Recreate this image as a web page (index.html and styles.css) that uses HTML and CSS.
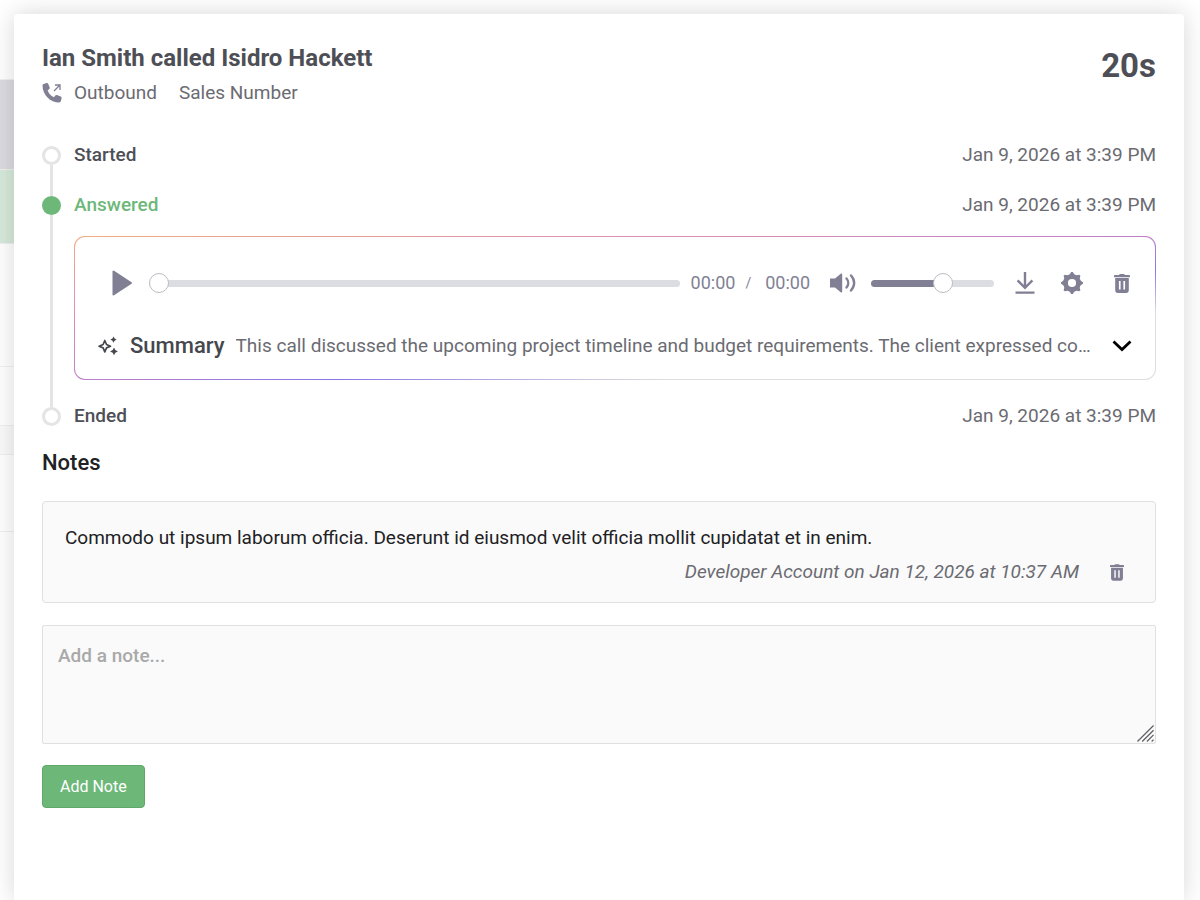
FILE: index.html
```
<!DOCTYPE html>
<html lang="en">
<head>
    <meta charset="UTF-8">
    <meta name="viewport" content="width=device-width, initial-scale=1.0">
    <title>Call details</title>
    <link rel="stylesheet" href="styles.css">
</head>
<body>
    <div class="backdrop">
        <div class="row row-blank"></div>
        <div class="row row-header"></div>
        <div class="row row-selected"></div>
        <div class="row row-tall"></div>
        <div class="row row-medium"></div>
        <div class="row row-short"></div>
        <div class="row row-item"></div>
    </div>

    <main class="modal">
        <header class="call-header">
            <div>
                <h1 class="call-title">Ian Smith called Isidro Hackett</h1>
                <div class="call-meta">
                    <svg class="icon-phone" viewBox="0 0 20 20" aria-hidden="true">
                        <path fill="#817f94" d="M1.600 1 4.600.1C5.300-.1 6 .2 6.300.9l1.400 3.500c.3.600.1 1.300-.5 1.700L5.600 7.500c1.100 3 3.300 5.300 6.300 6.700l1.400-1.700c.4-.5 1.100-.7 1.700-.4l3.700 1.500c.7.300 1.100 1 .9 1.700l-.8 3c-.2.700-.8 1.200-1.500 1.200C8.300 19.500.5 11.700.5 2.400.5 1.700.9 1.200 1.600 1z"/>
                        <path fill="none" stroke="#817f94" stroke-width="1.300" d="M12 8 17.700 2.300M13 2h5v5"/>
                    </svg>
                    <span>Outbound</span>
                    <span class="call-number">Sales Number</span>
                </div>
            </div>
            <div class="call-duration">20s</div>
        </header>

        <ol class="timeline">
            <li class="event">
                <div class="marker"><span class="dot"></span><span class="line"></span></div>
                <div class="event-body">
                    <div class="event-row">
                        <span class="event-label">Started</span>
                        <time class="event-time">Jan 9, 2026 at 3:39 PM</time>
                    </div>
                </div>
            </li>
            <li class="event">
                <div class="marker"><span class="dot dot-active"></span><span class="line"></span></div>
                <div class="event-body">
                    <div class="event-row">
                        <span class="event-label event-label-active">Answered</span>
                        <time class="event-time">Jan 9, 2026 at 3:39 PM</time>
                    </div>
                    <section class="recording">
                        <div class="player">
                            <button type="button" class="icon-button play" aria-label="Play">
                                <svg width="20" height="26" viewBox="0 0 20 26"><path d="M1.500 1.500v23L19 13z" fill="#817f94" stroke="#817f94" stroke-width="2" stroke-linejoin="round"/></svg>
                            </button>
                            <input type="range" class="slider seek" min="0" max="100" value="0" aria-label="Seek">
                            <div class="clock"><span>00:00</span><span class="slash">/</span><span>00:00</span></div>
                            <button type="button" class="icon-button mute" aria-label="Mute">
                                <svg width="26" height="20" viewBox="0 0 26 20">
                                    <path fill="#817f94" d="M0 5.500h5L11 .6c.5-.4 1.200-.1 1.200.6v17.600c0 .7-.7 1-1.200.6l-6-4.900H0z"/>
                                    <path fill="none" stroke="#817f94" stroke-width="2.400" stroke-linecap="round" d="M16.500 5.500c2.300 2.600 2.300 6.400 0 9M21 2.500c4.200 4.500 4.200 10.500 0 15"/>
                                </svg>
                            </button>
                            <input type="range" class="slider volume" min="0" max="100" value="60" aria-label="Volume">
                            <button type="button" class="icon-button download" aria-label="Download">
                                <svg width="20" height="22" viewBox="0 0 20 22"><path fill="none" stroke="#817f94" stroke-width="2.400" d="M10 0v15M2.600 8.400 10 15.800l7.400-7.400M.5 20.600h19"/></svg>
                            </button>
                            <button type="button" class="icon-button settings" aria-label="Settings">
                                <svg width="22" height="22" viewBox="0 0 22 22">
                                    <circle cx="11" cy="11" r="6.500" fill="none" stroke="#817f94" stroke-width="4.800"/>
                                    <g fill="#817f94">
                                        <path id="tooth" d="M8 3.500 10.200 0h1.600l2.200 3.500z"/>
                                        <use href="#tooth" transform="rotate(45 11 11)"/>
                                        <use href="#tooth" transform="rotate(90 11 11)"/>
                                        <use href="#tooth" transform="rotate(135 11 11)"/>
                                        <use href="#tooth" transform="rotate(180 11 11)"/>
                                        <use href="#tooth" transform="rotate(225 11 11)"/>
                                        <use href="#tooth" transform="rotate(270 11 11)"/>
                                        <use href="#tooth" transform="rotate(315 11 11)"/>
                                    </g>
                                </svg>
                            </button>
                            <button type="button" class="icon-button" aria-label="Delete recording">
                                <svg width="16" height="19" viewBox="0 0 16 19">
                                    <path fill="#817f94" fill-rule="evenodd" d="M5 .9C5.300.3 5.700 0 6.300 0h3.400c.6 0 1 .3 1.300.9h4.200c.5 0 .8.300.8.800V3.200H0V1.700C0 1.200.3.900.8.900zM1.200 4.100h13.600v12.100c0 1.600-1 2.800-2.600 2.800H3.800c-1.600 0-2.600-1.200-2.600-2.800zM4.900 7v8.600h1.700V7zM9.400 7v8.600h1.700V7z"/>
                                </svg>
                            </button>
                        </div>
                        <div class="summary">
                            <svg class="icon-sparkle" viewBox="0 0 20 20" aria-hidden="true">
                                <path fill="none" stroke="#46474d" stroke-width="1.700" stroke-linejoin="round" d="M6.800 4.500 8.500 8.500 12.500 10.200 8.500 11.900 6.800 15.900 5.100 11.900 1.100 10.200 5.100 8.500z"/>
                                <path fill="#46474d" d="m15.500.5 1.100 2 2 1.100-2 1.100-1.100 2-1.100-2-2-1.100 2-1.100zM16 11.500l1.300 2.600 2.600 1.300-2.600 1.300L16 19.300l-1.300-2.600-2.600-1.300 2.600-1.300z"/>
                            </svg>
                            <h2 class="summary-title">Summary</h2>
                            <p class="summary-text">This call discussed the upcoming project timeline and budget requirements. The client expressed concerns about the delivery schedule.</p>
                            <button type="button" class="icon-button" aria-label="Expand summary">
                                <svg width="20" height="12" viewBox="0 0 20 12"><path fill="none" stroke="#000" stroke-width="2.800" d="m1.500 1.500 8.500 8 8.500-8"/></svg>
                            </button>
                        </div>
                    </section>
                </div>
            </li>
            <li class="event">
                <div class="marker"><span class="dot"></span></div>
                <div class="event-body">
                    <div class="event-row">
                        <span class="event-label">Ended</span>
                        <time class="event-time">Jan 9, 2026 at 3:39 PM</time>
                    </div>
                </div>
            </li>
        </ol>

        <section>
            <h2 class="notes-title">Notes</h2>
            <article class="note">
                <p class="note-text">Commodo ut ipsum laborum officia. Deserunt id eiusmod velit officia mollit cupidatat et in enim.</p>
                <div class="note-footer">
                    <span class="note-author">Developer Account on Jan 12, 2026 at 10:37 AM</span>
                    <button type="button" class="icon-button" aria-label="Delete note">
                        <svg width="14" height="17" viewBox="0 0 16 19">
                            <path fill="#817f94" fill-rule="evenodd" d="M5 .9C5.300.3 5.700 0 6.300 0h3.400c.6 0 1 .3 1.300.9h4.200c.5 0 .8.300.8.800V3.200H0V1.700C0 1.200.3.900.8.900zM1.200 4.100h13.600v12.100c0 1.600-1 2.800-2.600 2.800H3.800c-1.600 0-2.600-1.200-2.600-2.800zM4.900 7v8.600h1.700V7zM9.400 7v8.600h1.700V7z"/>
                        </svg>
                    </button>
                </div>
            </article>
            <form class="note-form">
                <div class="note-field">
                    <textarea class="note-input" placeholder="Add a note..." aria-label="Add a note"></textarea>
                    <svg class="grip" viewBox="0 0 18 18" aria-hidden="true"><path fill="none" stroke="#5e5e66" stroke-width="1.300" d="M.5 17.500l17-17M5.500 17.500l12-12M10.500 17.500l7-7M15.500 17.500l2-2"/></svg>
                </div>
                <button type="button" class="add-note">Add Note</button>
            </form>
        </section>
    </main>
</body>
</html>
```
FILE: styles.css
```
* {
    box-sizing: border-box;
}

body {
    margin: 0;
    min-height: 100vh;
    display: grid;
    font-family: Roboto, sans-serif;
    font-size: 19px;
    line-height: 24px;
    color: #6b6b72;
    background: #fff;
}

h1, h2, p, ol {
    margin: 0;
    padding: 0;
}

/* Page behind the modal */
.backdrop {
    grid-area: 1 / 1;
}

.row {
    width: 40px;
    border-bottom: 1px solid #f0f0f0;
}

.row-blank {
    height: 80px;
}

.row-header {
    height: 90px;
    background: #dcdbe1;
}

.row-selected {
    height: 74px;
    background: #d6eadb;
}

.row-tall {
    height: 123px;
}

.row-medium {
    height: 59px;
}

.row-short {
    height: 29px;
    background: #fafafa;
}

.row-item {
    height: 77px;
}

/* Modal */
.modal {
    grid-area: 1 / 1;
    min-width: 0;
    margin: 14px 16px 0 14px;
    padding: 28px;
    background: #fff;
    border-radius: 4px 4px 0 0;
    box-shadow: 0 0 24px rgba(0, 0, 0, 0.16);
}

.call-header {
    display: flex;
    justify-content: space-between;
}

.call-title {
    font-size: 24px;
    line-height: 32px;
    font-weight: 700;
    color: #4e4f56;
}

.call-meta {
    display: flex;
    align-items: center;
    margin-top: 7px;
}

.icon-phone {
    width: 20px;
    height: 20px;
    margin-right: 12px;
}

.call-number {
    margin-left: 22px;
}

.call-duration {
    font-size: 33px;
    line-height: 48px;
    font-weight: 700;
    color: #4e4f56;
}

/* Timeline */
.timeline {
    margin-top: 36px;
    list-style: none;
}

.event {
    display: grid;
    grid-template-columns: 19px 1fr;
    gap: 13px;
}

.marker {
    display: flex;
    flex-direction: column;
    align-items: center;
    padding-top: 5px;
}

.dot {
    width: 19px;
    height: 19px;
    border: 3px solid #e4e4e4;
    border-radius: 50%;
}

.dot-active {
    background: #6db879;
    border-color: #6db879;
}

.line {
    flex: 1;
    width: 3px;
    margin-bottom: -5px;
    background: #e4e4e4;
}

.event-body {
    min-width: 0;
    padding-bottom: 22px;
}

.event:last-child .event-body {
    padding-bottom: 0;
}

.event-row {
    display: flex;
    align-items: center;
    justify-content: space-between;
    min-height: 28px;
}

.event-label {
    font-weight: 500;
    color: #4e4f56;
}

.event-label-active {
    color: #6db879;
}

/* Recording card */
.recording {
    margin-top: 17px;
    padding: 31px 23px 21px;
    border: 1px solid transparent;
    border-radius: 11px;
    background:
        linear-gradient(#fff, #fff) padding-box,
        linear-gradient(to bottom right, #f0ac80, #df90b0 25%, #bf7fc8 50%, #8577e6 62%, #dedede 77%) border-box;
}

.player {
    display: flex;
    align-items: center;
    height: 30px;
    padding: 0 2px 0 14px;
    color: #817f94;
}

.icon-button {
    display: flex;
    padding: 0;
    border: none;
    background: none;
    cursor: pointer;
}

.play {
    margin-right: 17px;
}

.slider {
    -webkit-appearance: none;
    appearance: none;
    height: 20px;
    margin: 0;
    background: none;
}

.slider::-webkit-slider-runnable-track {
    height: 7px;
    border-radius: 4px;
    background: #dcdce3;
}

.slider::-webkit-slider-thumb {
    -webkit-appearance: none;
    width: 20px;
    height: 20px;
    margin-top: -7px;
    border: 1px solid #bcbcc4;
    border-radius: 50%;
    background: #fff;
}

.seek {
    flex: 1;
    min-width: 0;
}

.volume {
    width: 123px;
}

.volume::-webkit-slider-runnable-track {
    background: linear-gradient(to right, #817f94 60%, #dcdce3 60%);
}

.clock {
    display: flex;
    margin: 0 20px 0 11px;
    font-size: 18px;
}

.slash {
    margin: 0 14px 0 10px;
    font-size: 14px;
}

.mute {
    margin-right: 15px;
}

.download {
    margin-left: 21px;
}

.settings {
    margin: 0 31px 0 26px;
}

.summary {
    display: flex;
    align-items: center;
    margin-top: 36px;
}

.icon-sparkle {
    flex: none;
    width: 20px;
    height: 20px;
    margin-right: 12px;
}

.summary-title {
    margin-right: 11px;
    font-size: 22px;
    font-weight: 500;
    color: #46474d;
}

.summary-text {
    flex: 1;
    min-width: 0;
    margin-right: 18px;
    overflow: hidden;
    white-space: nowrap;
    text-overflow: ellipsis;
}

/* Notes */
.notes-title {
    margin: 21px 0 26px;
    font-size: 22px;
    font-weight: 500;
    color: #212124;
}

.note {
    padding: 24px 31px 18px 22px;
    border: 1px solid #e0e0e0;
    border-radius: 4px;
    background: #fafafa;
}

.note-text {
    color: #212124;
}

.note-footer {
    display: flex;
    align-items: center;
    justify-content: flex-end;
    gap: 31px;
    margin-top: 10px;
    font-style: italic;
}

.note-form {
    margin-top: 22px;
}

.note-field {
    position: relative;
}

.note-input {
    display: block;
    width: 100%;
    height: 119px;
    padding: 18px 15px;
    border: 1px solid #e0e0e0;
    border-radius: 2px;
    background: #fafafa;
    font: inherit;
    color: #212124;
    resize: vertical;
}

.note-input::placeholder {
    font-weight: 500;
    color: #a9a9a9;
}

.note-input::-webkit-resizer {
    background: transparent;
}

.grip {
    position: absolute;
    right: 2px;
    bottom: 2px;
    width: 17px;
    height: 17px;
    pointer-events: none;
}

.add-note {
    height: 43px;
    margin-top: 21px;
    padding: 0 17px;
    border: 1px solid #5fa86b;
    border-radius: 4px;
    background: #6db879;
    font-family: inherit;
    font-size: 16px;
    color: #fff;
    cursor: pointer;
}
```
